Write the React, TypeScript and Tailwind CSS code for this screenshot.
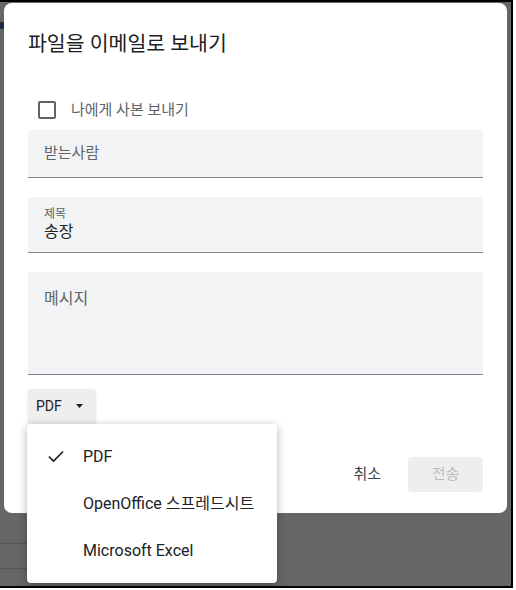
import { Check } from "lucide-react"

const font = { fontFamily: "Roboto, 'Noto Sans CJK KR', sans-serif" }

export default function App() {
  return (
    <div className="h-[590px] w-[516px] bg-white" style={font}>
      <div className="relative h-[588px] w-[513px] overflow-hidden border-y-2 border-r-2 border-black bg-[#666666]">
        {/* page bits peeking out behind the backdrop */}
        <div className="absolute left-0 top-[20px] h-[7px] w-[4px] bg-[#1f2a44]" />
        <div className="absolute left-0 top-[541px] h-px w-[40px] bg-[#555555]" />
        <div className="absolute left-0 top-[566px] h-px w-[40px] bg-[#555555]" />

        <div className="absolute left-[4px] top-[1px] flex h-[510px] w-[503px] flex-col rounded-lg bg-white px-6">
          <h1 className="pt-[27px] text-[20.5px] leading-[28px] text-[#202124]">파일을 이메일로 보내기</h1>

          <label className="mt-[41px] flex items-center pl-[10px]">
            <span className="h-[18px] w-[18px] rounded-[2px] border-2 border-[#5f6368]" />
            <span className="ml-[15px] text-[15px] text-[#5f6368]">나에게 사본 보내기</span>
          </label>

          <div className="mt-[8px] flex h-[48px] items-center rounded-t border-b border-[#80868b] bg-[#f1f3f4] px-4">
            <span className="text-[15px] text-[#5f6368]">받는사람</span>
          </div>

          <div className="mt-[19px] flex h-[56px] flex-col justify-center rounded-t border-b border-[#80868b] bg-[#f1f3f4] px-4">
            <span className="text-xs leading-4 text-[#5f6368]">제목</span>
            <span className="text-base leading-5 text-[#202124]">송장</span>
          </div>

          <div className="mt-[19px] h-[103px] rounded-t border-b border-[#80868b] bg-[#f1f3f4] px-4 pt-[15px]">
            <span className="text-base text-[#5f6368]">메시지</span>
          </div>

          <div className="mt-[14px] flex h-[35px] w-[68px] items-center rounded bg-[#eeeeee] pl-2 shadow-sm">
            <span className="text-sm text-[#202124]">PDF</span>
            <svg className="ml-[14px]" width="7" height="4" viewBox="0 0 7 4">
              <path d="M0 0h7L3.5 4z" fill="#202124" />
            </svg>
          </div>

          <div className="mt-[33px] flex items-center justify-end gap-[27px]">
            <span className="text-[15px] text-[#3c4043]">취소</span>
            <span className="flex h-[35px] w-[75px] items-center justify-center rounded bg-[#eeeeee] text-[15px] text-[#bdbdbd]">
              전송
            </span>
          </div>
        </div>

        <div className="absolute left-[27px] top-[422px] w-[250px] rounded bg-white py-[9px] shadow-[0_2px_8px_rgba(0,0,0,0.3)]">
          {[
            { label: "PDF", checked: true },
            { label: "OpenOffice 스프레드시트", checked: false },
            { label: "Microsoft Excel", checked: false },
          ].map((item) => (
            <div key={item.label} className="flex h-[47px] items-center">
              <span className="flex w-[56px] justify-center pl-[2px]">
                {item.checked && <Check size={20} strokeWidth={2} className="text-[#202124]" />}
              </span>
              <span className="text-base text-[#202124]">{item.label}</span>
            </div>
          ))}
        </div>
      </div>
    </div>
  )
}
